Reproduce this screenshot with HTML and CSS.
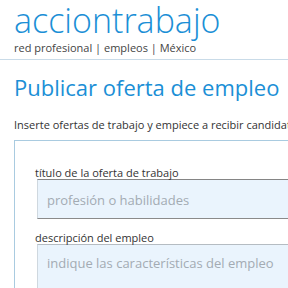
FILE: index.html
```html
<!DOCTYPE html>
<html lang="es">
<head>
<meta charset="utf-8">
<link rel="stylesheet" href="styles.css">
</head>
<body>
<header class="top">
  <div class="logo">acciontrabajo</div>
  <div class="tagline">red profesional | empleos | México</div>
</header>
<main class="main">
  <h1 class="title">Publicar oferta de empleo</h1>
  <p class="intro">Inserte ofertas de trabajo y empiece a recibir candidatos</p>
  <section class="panel">
    <label class="label">título de la oferta de trabajo</label>
    <div class="input">profesión o habilidades</div>
    <label class="label second">descripción del empleo</label>
    <div class="input area">indique las características del empleo</div>
  </section>
</main>
</body>
</html>
```
FILE: styles.css
```css
html, body { margin: 0; padding: 0; }
body {
  font-family: "Open Sans", "Noto Sans", sans-serif;
  background: #fff;
  color: #333;
  width: 288px;
  height: 288px;
  overflow: hidden;
  white-space: nowrap;
}
.top {
  padding: 0 0 4px 14px;
  border-bottom: 1px solid #c9dbe8;
}
.logo {
  font-size: 34px;
  line-height: 40px;
  font-weight: 300;
  color: #1b8fd6;
}
.tagline {
  margin-top: 1px;
  font-size: 11px;
  line-height: 14px;
  color: #444;
}
.main { padding: 0 0 0 14px; }
.title {
  margin: 13px 0 0;
  font-size: 22px;
  line-height: 28px;
  font-weight: 400;
  color: #1b8fd6;
}
.intro {
  margin: 17px 0 0;
  font-size: 11px;
  line-height: 14px;
  color: #333;
}
.panel {
  margin-top: 8px;
  border: 1px solid #a9cbe0;
  border-right: none;
  padding: 25px 0 0 20px;
  width: 300px;
}
.label {
  display: block;
  font-size: 11px;
  line-height: 13px;
  color: #333;
}
.second { margin-top: 12px; }
.input {
  margin-left: 2px;
  height: 40px;
  box-sizing: border-box;
  border: 1px solid #cfd8df;
  border-top-color: #858585;
  border-bottom-color: #8a8a8a;
  background: #eaf4fd;
  font-size: 13px;
  line-height: 35px;
  padding: 3px 0 0 9px;
  color: #a3abb3;
}
.area {
  height: 80px;
  line-height: 30px;
  border-top-color: #b5bcc2;
}
```
